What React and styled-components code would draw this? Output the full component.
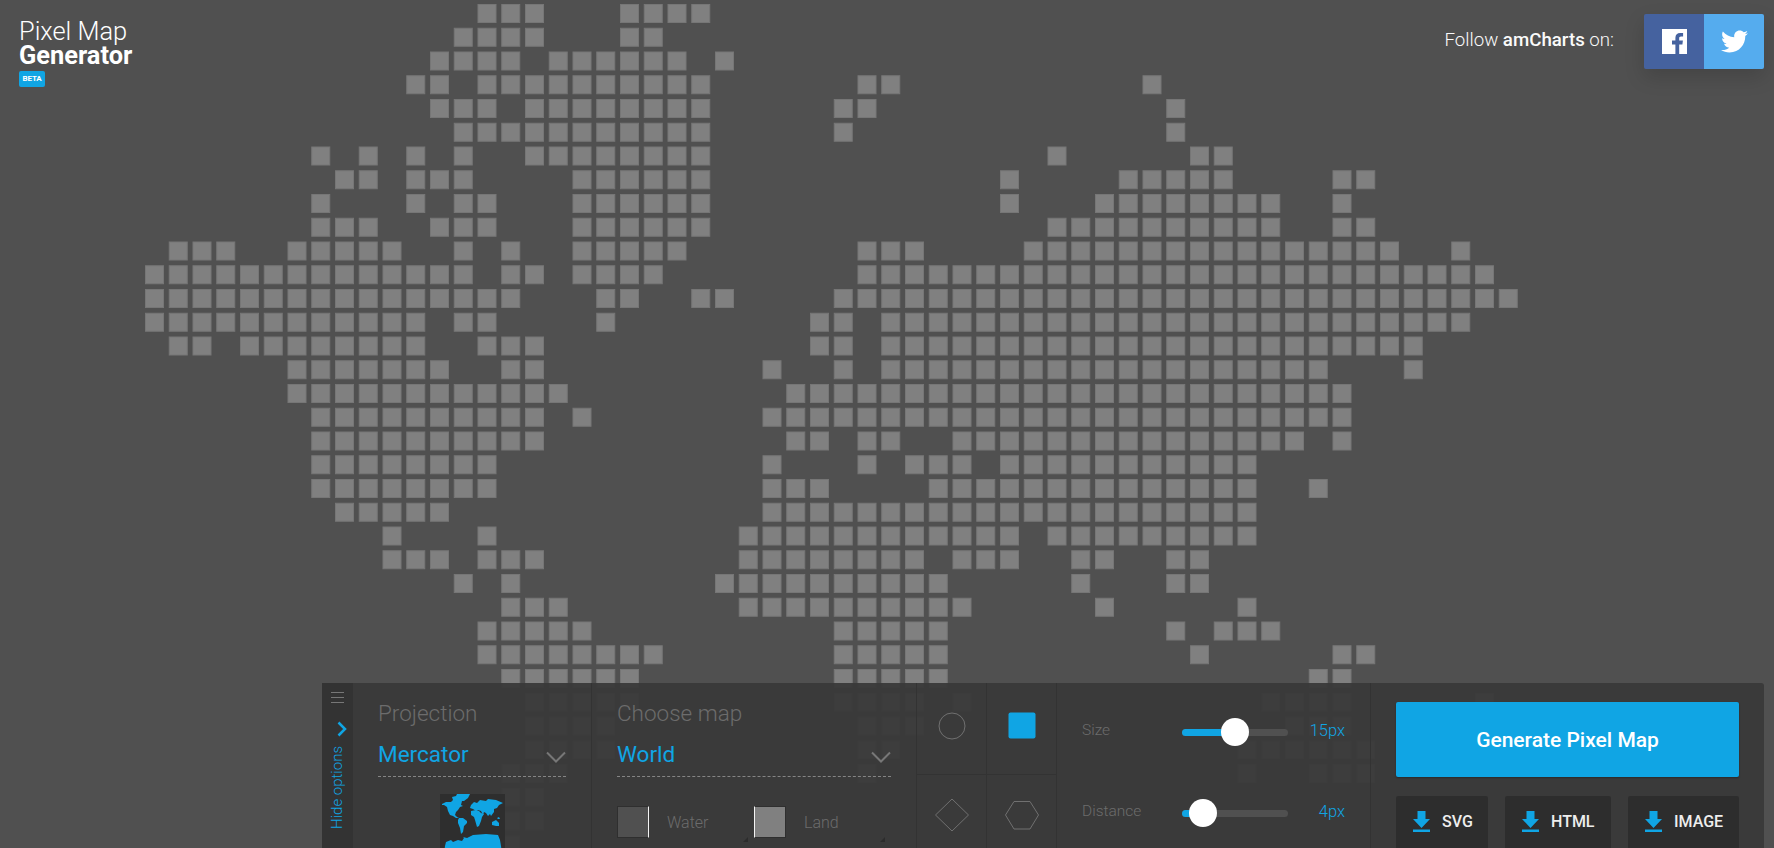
import styled, { createGlobalStyle } from 'styled-components'
import { FaTwitter } from 'react-icons/fa'

const GlobalStyle = createGlobalStyle`
    html, body {
        margin: 0;
        height: 100%;
        background: #505050;
        font-family: Roboto, "Liberation Sans", sans-serif;
        overflow: hidden;
    }
`

const BLUE = '#10a5e4'
const PITCH = 23.75

// each row is a list of column ranges of the pixel map
const ROWS = [
    '14-16 20-23',
    '13-16 20-21',
    '12-15 17-22 24',
    '11-12 14-23 30-31 42',
    '12-14 16-23 29-30 43',
    '13-23 29 43',
    '7 9 11 13 16-23 38 44-45',
    '8-9 11-13 18-23 36 41-45 50-51',
    '7 11 13-14 18-23 36 40-47 50',
    '7-9 12-14 18-23 38-47 50-51',
    '1-3 6-10 13 15 18-22 30-32 37-52 55',
    '0-13 15-16 18-21 30-56',
    '0-15 19-20 23-24 29-57',
    '0-11 13-14 19 28-29 31-55',
    '1-2 4-11 14-16 28-29 31-53',
    '6-12 15-16 26 29 31-49 53',
    '6-17 27-50',
    '7-16 18 26-50',
    '7-16 27-28 30-31 34-48 50',
    '7-14 26 30 32-34 36-46',
    '7-14 26-28 33-46 49',
    '8-12 26-46',
    '10 14 25-36 38-46',
    '10-12 14-16 25-32 34-36 39-40 43-44',
    '13 15 24-33 39 43-44',
    '15-17 25-34 40 46',
    '14-18 29-33 43 45-47',
    '14-21 29-33 44 50-51',
    '15-20 29-33 49-50',
    '16-20 29-32 34 47-50 56',
    '16-19 30-32 48-50',
    '16-19 30-31 46-51',
    '15-17 30 46 49-51',
    '15-16',
    '15-16',
    '15',
]

const cells = ROWS.flatMap((row, r) =>
    row.split(' ').flatMap((range) => {
        const [from, to = from] = range.split('-').map(Number)
        const out = []
        for (let c = from; c <= to; c++) out.push([c, r])
        return out
    })
)

const Page = styled.div`
    position: relative;
    width: 100%;
    height: 100vh;
    overflow: hidden;
    background: #505050;
`

const MapLayer = styled.svg`
    position: absolute;
    inset: 0;
    width: 100%;
    height: 100%;
`

const Header = styled.header`
    position: absolute;
    top: 0;
    left: 0;
    right: 10px;
    display: flex;
    justify-content: space-between;
    align-items: flex-start;
`

const Logo = styled.div`
    padding: 19px 0 0 19px;
    color: #fff;
    font-size: 25.4px;
    font-weight: 300;
`

const LogoLine = styled.div`
    height: 24px;
    line-height: 24px;
    font-weight: ${(p) => p.$weight};
`

const Beta = styled.span`
    display: block;
    width: 26px;
    height: 16px;
    margin-top: 4px;
    border-radius: 2px;
    background: ${BLUE};
    font-size: 8px;
    line-height: 16px;
    font-weight: 700;
    text-align: center;
    letter-spacing: -0.2px;
`

const Follow = styled.div`
    display: flex;
    align-items: flex-start;
    gap: 30px;
    padding-top: 14px;
`

const FollowText = styled.span`
    color: #fafafa;
    font-size: 18.7px;
    font-weight: 300;
    line-height: 52px;

    b {
        font-weight: 500;
    }
`

const Social = styled.div`
    display: flex;
    border-radius: 2px;
    overflow: hidden;
    box-shadow: 0 8px 20px rgba(0, 0, 0, 0.15);
`

const SocialButton = styled.a`
    width: 60px;
    height: 55px;
    display: flex;
    align-items: center;
    justify-content: center;
    background: ${(p) => p.$color};
    color: #fff;
`

const Panel = styled.section`
    position: absolute;
    left: 322px;
    top: 683px;
    width: 1442px;
    height: 185px;
    display: flex;
    border-radius: 3px 3px 0 0;
    background: rgba(56, 56, 56, 0.94);
`

const Strip = styled.div`
    width: 31px;
    flex: none;
    background: #333;
    display: flex;
    flex-direction: column;
    align-items: center;
`

const Burger = styled.span`
    width: 13px;
    height: 9px;
    margin-top: 9px;
    border-top: 1px solid #777;
    border-bottom: 1px solid #777;
    position: relative;

    &::after {
        content: '';
        position: absolute;
        left: 0;
        right: 0;
        top: 4px;
        height: 1px;
        background: #777;
    }
`

const StripChevron = styled.svg`
    width: 10px;
    height: 16px;
    margin: 18px 0 0 8px;
    display: block;
`

const HideLabel = styled.span`
    margin-top: 9px;
    writing-mode: vertical-rl;
    transform: rotate(180deg);
    color: ${BLUE};
    font-size: 15px;
    font-weight: 300;
    line-height: 15px;
    white-space: nowrap;
`

const Section = styled.div`
    flex: none;
    box-sizing: border-box;
    width: ${(p) => p.$width}px;
    padding: 17px 25px 0;
    border-right: 1px solid #333;
`

const SectionTitle = styled.div`
    color: #6c6c6c;
    font-size: 22.5px;
    font-weight: 300;
    line-height: 26px;
`

const Select = styled.div`
    display: flex;
    justify-content: space-between;
    align-items: center;
    height: 48px;
    margin-top: 3px;
    box-sizing: border-box;
    padding-top: 2px;
    border-bottom: 1px dashed #858585;
    color: ${BLUE};
    font-size: 22.5px;
    line-height: 40px;
`

const Chevron = styled.svg`
    width: 20px;
    height: 12px;
    margin-top: 6px;
`

const Thumb = styled.svg`
    display: block;
    width: 65px;
    height: 60px;
    margin: 17px auto 0;
    background: #2e2e2e;
`

const Swatches = styled.div`
    display: flex;
    margin-top: 29px;
`

const SwatchItem = styled.div`
    position: relative;
    display: flex;
    align-items: center;
    width: 139px;
    color: #6c6c6c;
    font-size: 16px;
    font-weight: 300;
    height: 32px;

    &::after {
        content: '';
        position: absolute;
        left: 126px;
        bottom: -4px;
        border-left: 5px solid transparent;
        border-bottom: 5px solid #2c2c2c;
    }
`

const SwatchBox = styled.span`
    box-sizing: border-box;
    width: 32px;
    height: 32px;
    margin-right: 18px;
    background: ${(p) => p.$fill};
    border: 1px solid #2f2f2f;
    border-${(p) => p.$side}: 1px solid #f4f4f4;
`

const Shapes = styled.div`
    flex: none;
    width: 140px;
    box-sizing: border-box;
    height: 185px;
    display: grid;
    grid-template-columns: 70px 69px;
    grid-template-rows: 92px 93px;
    border-right: 1px solid #333;
`

const ShapeCell = styled.div`
    display: flex;
    justify-content: center;
    align-items: flex-start;
    padding-top: ${(p) => (p.$row === 1 ? 25 : 22)}px;
    box-sizing: border-box;
    border-bottom: ${(p) => (p.$row === 1 ? '1px solid #333' : 'none')};
    border-right: ${(p) => (p.$col === 1 ? '1px solid #333' : 'none')};
`

const ShapeIcon = styled.svg`
    width: 36px;
    height: 36px;
    display: block;
`

const Sliders = styled.div`
    flex: none;
    width: 314px;
    box-sizing: border-box;
    padding: 40px 25px 0;
    border-right: 1px solid #333;
    display: flex;
    flex-direction: column;
    gap: 63px;
`

const SliderRow = styled.div`
    display: flex;
    align-items: center;
    height: 18px;
`

const SliderLabel = styled.span`
    width: 100px;
    margin-bottom: 4px;
    color: #6c6c6c;
    font-size: 15.5px;
    font-weight: 300;
`

const Track = styled.div`
    position: relative;
    width: 106px;
    height: 7px;
    border-radius: 4px;
    background: #505050;
`

const TrackFill = styled.div`
    height: 100%;
    border-radius: 4px;
    background: ${BLUE};
`

const Knob = styled.span`
    position: absolute;
    top: 50%;
    width: 28px;
    height: 28px;
    margin: -14px 0 0 -14px;
    border-radius: 50%;
    background: #fff;
`

const SliderValue = styled.span`
    flex: 1;
    margin-bottom: 4px;
    text-align: right;
    color: ${BLUE};
    font-size: 16.5px;
    font-weight: 300;
`

const Actions = styled.div`
    flex: 1;
    padding: 19px 25px 0;
`

const GenerateButton = styled.button`
    display: block;
    width: 100%;
    height: 75px;
    border: none;
    border-radius: 2px;
    background: ${BLUE};
    color: #fff;
    font-family: inherit;
    font-size: 21px;
    font-weight: 500;
    box-shadow: 0 1px 2px rgba(0, 0, 0, 0.3);
`

const Downloads = styled.div`
    display: flex;
    gap: 17px;
    margin-top: 19px;
`

const DownloadButton = styled.button`
    display: flex;
    align-items: flex-start;
    gap: 12px;
    box-sizing: border-box;
    width: ${(p) => p.$width}px;
    height: 60px;
    padding: 15px 0 0 17px;
    border: none;
    border-radius: 2px;
    background: #2d2d2d;
    color: #eee;
    font-family: inherit;
    font-size: 16px;
    font-weight: 500;
    line-height: 22px;
`

const DownloadIcon = () => (
    <svg width="17" height="21" viewBox="0 0 17 21" style={{ flex: 'none' }}>
        <path d="M4.500 0h8v8H17l-8.500 9L0 8h4.500z" fill={BLUE} />
        <rect y="18.500" width="17" height="2.500" fill={BLUE} />
    </svg>
)

const FacebookIcon = () => (
    <svg width="25" height="25" viewBox="0 0 25 25">
        <rect width="25" height="25" fill="#fff" />
        <path d="M17.200 25v-9.600h3.200l.5-3.800h-3.700V9.200c0-1.100.3-1.800 1.900-1.800h2V4c-.4 0-1.500-.1-2.900-.1-2.900 0-4.800 1.700-4.800 4.900v2.800H10v3.800h3.400V25z" fill="#45629f" />
    </svg>
)

const Slider = ({ label, value, percent }) => (
    <SliderRow>
        <SliderLabel>{label}</SliderLabel>
        <Track>
            <TrackFill style={{ width: `${percent}%` }} />
            <Knob style={{ left: `${percent}%` }} />
        </Track>
        <SliderValue>{value}</SliderValue>
    </SliderRow>
)

const App = () => {
    return (
        <Page>
            <GlobalStyle />
            <MapLayer viewBox="0 0 1774 848">
                {cells.map(([c, r]) => (
                    <rect
                        key={`${c}-${r}`}
                        x={145.5 + c * PITCH}
                        y={4.5 + r * PITCH}
                        width="18"
                        height="18"
                        fill="#808080"
                        stroke="#767676"
                    />
                ))}
            </MapLayer>

            <Header>
                <Logo>
                    <LogoLine $weight={300}>Pixel Map</LogoLine>
                    <LogoLine $weight={700}>Generator</LogoLine>
                    <Beta>BETA</Beta>
                </Logo>
                <Follow>
                    <FollowText>Follow <b>amCharts</b> on:</FollowText>
                    <Social>
                        <SocialButton $color="#45629f"><FacebookIcon /></SocialButton>
                        <SocialButton $color="#55acee"><FaTwitter size={27} /></SocialButton>
                    </Social>
                </Follow>
            </Header>

            <Panel>
                <Strip>
                    <Burger />
                    <StripChevron viewBox="0 0 10 16">
                        <path d="M1.500 1.500L8 8l-6.500 6.500" fill="none" stroke={BLUE} strokeWidth="2.500" />
                    </StripChevron>
                    <HideLabel>Hide options</HideLabel>
                </Strip>

                <Section $width={239}>
                    <SectionTitle>Projection</SectionTitle>
                    <Select>
                        Mercator
                        <Chevron viewBox="0 0 20 12">
                            <path d="M1 1.500l9 9 9-9" fill="none" stroke="#777" strokeWidth="2" />
                        </Chevron>
                    </Select>
                    <Thumb viewBox="0 0 65 60">
                        <g fill={BLUE}>
                            <path d="M2 10l4-2 5 0 2-2-1-3 4-1 1-2h13l-2 4-4 3-2 0-1 4 2 1-3 1-2 3-2 2-1 3 2 2 2 1-3 0-3-2-3-1-2-4-1-4-3-2-2 0z" />
                            <path d="M19 24l4 0 4 3 0 2-3 3-1 6-2 2-1-6-2-5 0-3z" />
                            <path d="M31 11l3-3 3 1 3-3 6 1 2-2 8 1 7 3-4 2-2 3-3 1 0 3-3 4-1-2-2 2-2-3-2-1-1 3-2-4-3-1-2 1-3-2-3-1z" />
                            <path d="M31 17l5-1 3 1 2 2 3 1-2 3-1 4-2 5-2 1-2-7-1-3-3-2z" />
                            <path d="M52 28l4-2 3 3 0 3-3 0-4-1z" />
                            <path d="M57 24l2-1 1 2-2 0z" />
                            <path d="M6 48l5-2 2 2 5-2 4 1 2-3-1-1 4 1 6-3 13-1 12 1 2 5 1 6 1 8H4l1-8z" />
                        </g>
                    </Thumb>
                </Section>

                <Section $width={325}>
                    <SectionTitle>Choose map</SectionTitle>
                    <Select>
                        World
                        <Chevron viewBox="0 0 20 12">
                            <path d="M1 1.500l9 9 9-9" fill="none" stroke="#777" strokeWidth="2" />
                        </Chevron>
                    </Select>
                    <Swatches>
                        <SwatchItem>
                            <SwatchBox $fill="#505050" $side="right" />
                            Water
                        </SwatchItem>
                        <SwatchItem>
                            <SwatchBox $fill="#808080" $side="left" />
                            Land
                        </SwatchItem>
                    </Swatches>
                </Section>

                <Shapes>
                    <ShapeCell $row={1} $col={1}>
                        <ShapeIcon viewBox="0 0 36 36"><circle cx="18" cy="18" r="13" fill="none" stroke="#707070" /></ShapeIcon>
                    </ShapeCell>
                    <ShapeCell $row={1} $col={2}>
                        <ShapeIcon viewBox="0 0 36 36"><rect x="4.500" y="4.500" width="27" height="26" rx="2" fill={BLUE} /></ShapeIcon>
                    </ShapeCell>
                    <ShapeCell $row={2} $col={1}>
                        <ShapeIcon viewBox="0 0 36 36"><path d="M18 2l16.500 16L18 34 1.500 18z" fill="none" stroke="#707070" /></ShapeIcon>
                    </ShapeCell>
                    <ShapeCell $row={2} $col={2}>
                        <ShapeIcon viewBox="0 0 36 36"><path d="M10 4.500h16L34.500 18 26 32H10L1.500 18z" fill="none" stroke="#707070" /></ShapeIcon>
                    </ShapeCell>
                </Shapes>

                <Sliders>
                    <Slider label="Size" value="15px" percent={50} />
                    <Slider label="Distance" value="4px" percent={20} />
                </Sliders>

                <Actions>
                    <GenerateButton>Generate Pixel Map</GenerateButton>
                    <Downloads>
                        <DownloadButton $width={92}><DownloadIcon />SVG</DownloadButton>
                        <DownloadButton $width={106}><DownloadIcon />HTML</DownloadButton>
                        <DownloadButton $width={111}><DownloadIcon />IMAGE</DownloadButton>
                    </Downloads>
                </Actions>
            </Panel>
        </Page>
    )
}

export default App
